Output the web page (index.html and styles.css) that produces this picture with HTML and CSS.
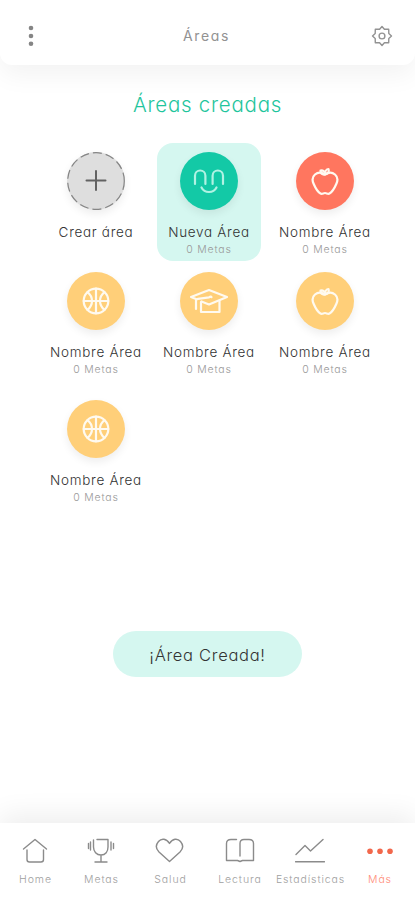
FILE: index.html
```html
<!DOCTYPE html>
<html lang="es">
<head>
  <meta charset="UTF-8">
  <meta name="viewport" content="width=device-width, initial-scale=1.0">
  <title>Áreas</title>
  <link rel="stylesheet" href="styles.css">
</head>
<body>
  <svg class="defs" width="0" height="0">
    <symbol id="apple" viewBox="0 0 30 30">
      <path d="M15 8.500C12 6.500 8 6 5 8.500C2 11 2 14 3.500 17.500C5 21 7.500 26 10.500 27.500C12 28.500 13.500 27 15 27S18 28.500 19.500 27.500C22.500 26 25 21 26.500 17.500C28 14 28 11 25 8.500C22 6 18 6.500 15 8.500Z"/>
      <path d="M15 8.500C12 9 10.500 7.500 10.500 4.500C13 4 15 5.500 15 8.500C15 5.500 16.500 3 18.500 3C19.500 6 18 8 15 8.500"/>
    </symbol>
    <symbol id="ball" viewBox="0 0 28 28">
      <circle cx="14" cy="14" r="12.300"/>
      <path d="M14 1.700V26.300M1.700 14H26.300M5.500 5.200C11.500 10 11.500 18 5.500 22.800M22.500 5.200C16.500 10 16.500 18 22.500 22.800"/>
    </symbol>
  </svg>

  <header class="topbar">
    <svg class="menu" width="6" height="22" viewBox="0 0 6 22">
      <circle cx="3" cy="3" r="2.300"/><circle cx="3" cy="11" r="2.300"/><circle cx="3" cy="18.700" r="2.300"/>
    </svg>
    <span class="topbar-title">Áreas</span>
    <svg class="gear" width="22" height="22" viewBox="0 0 22 22">
      <path d="M8.600 4.200L11 1.500L13.400 4.200L17.700 4.300L17.800 8.600L20.500 11L17.800 13.400L17.700 17.700L13.400 17.800L11 20.500L8.600 17.800L4.300 17.700L4.200 13.400L1.500 11L4.200 8.600L4.300 4.300Z"/>
      <circle cx="11" cy="11" r="2.900"/>
    </svg>
  </header>

  <main>
    <h1>Áreas creadas</h1>
    <div class="areas">
      <div class="area">
        <div class="circle add">
          <svg width="58" height="58" viewBox="0 0 58 58">
            <circle class="dash" cx="29" cy="29" r="28.300"/>
            <path class="plus" d="M29 19V38M19.500 28.500H38.500"/>
          </svg>
        </div>
        <div class="name">Crear área</div>
      </div>
      <div class="area selected">
        <div class="circle green">
          <svg width="34" height="28" viewBox="0 0 34 28">
            <path d="M3 17V8.700A5.200 5.200 0 0 1 13.400 8.700V17M20.600 17V8.700A5.200 5.200 0 0 1 31 8.700V17M9.500 20.500C12.500 26.500 21.500 26.500 24.500 20.500"/>
          </svg>
        </div>
        <div class="name">Nueva Área</div>
        <div class="goals">0 Metas</div>
      </div>
      <div class="area">
        <div class="circle red"><svg width="30" height="30"><use href="#apple"/></svg></div>
        <div class="name">Nombre Área</div>
        <div class="goals">0 Metas</div>
      </div>
      <div class="area">
        <div class="circle"><svg width="28" height="28"><use href="#ball"/></svg></div>
        <div class="name">Nombre Área</div>
        <div class="goals">0 Metas</div>
      </div>
      <div class="area">
        <div class="circle">
          <svg width="40" height="26" viewBox="0 0 40 26">
            <path d="M7 11L2 9L20 2L38 9L20 16.500L12.500 13.500"/>
            <path d="M7 21V12.500Q7 11.200 9 10.800L20 9.300Q22 8 22.500 9.200M12 14V24H30.500V12.500"/>
          </svg>
        </div>
        <div class="name">Nombre Área</div>
        <div class="goals">0 Metas</div>
      </div>
      <div class="area">
        <div class="circle"><svg width="30" height="30"><use href="#apple"/></svg></div>
        <div class="name">Nombre Área</div>
        <div class="goals">0 Metas</div>
      </div>
      <div class="area">
        <div class="circle"><svg width="28" height="28"><use href="#ball"/></svg></div>
        <div class="name">Nombre Área</div>
        <div class="goals">0 Metas</div>
      </div>
    </div>
    <div class="toast">¡Área Creada!</div>
  </main>

  <nav class="tabs">
    <div class="tab">
      <svg width="30" height="30" viewBox="0 0 30 30"><path d="M3.500 13L15 3.500L26.500 13M7 14V23.500Q7 26 9.500 26H21Q23.500 26 23.500 23.500V14"/></svg>
      <span>Home</span>
    </div>
    <div class="tab">
      <svg width="30" height="30" viewBox="0 0 30 30"><path d="M11 3.500H22V11C22 15.500 19.500 19 15 19S7.500 15.500 7.500 11V4M15 19V26M9 26H21M4.500 6V14M2.500 7.500V12.500M25 6V14M27.500 7.500V12.500"/></svg>
      <span>Metas</span>
    </div>
    <div class="tab">
      <svg width="30" height="30" viewBox="0 0 30 30"><path d="M14.500 7.500C11.500 2.500 6.500 2 3.500 5.500C.5 9 1 13 4 16L14.500 25.500L25 16C28 13 28.500 9 25.500 5.500C22.500 2 17.500 2.500 14.500 7.500Z"/></svg>
      <span>Salud</span>
    </div>
    <div class="tab">
      <svg width="30" height="30" viewBox="0 0 30 30"><path d="M11.500 3.500H6Q1.500 3.500 1.500 7.500V24.500H12.500L15 25.500L17.500 24.500H28.500V7.500Q28.500 3.500 24 3.500H19Q15 3.500 15 7.500V20"/></svg>
      <span>Lectura</span>
    </div>
    <div class="tab">
      <svg width="30" height="30" viewBox="0 0 30 30"><path d="M1 18.500L10 9.500L15.500 15L28 3.500M.5 25.800H29.500"/></svg>
      <span>Estadísticas</span>
    </div>
    <div class="tab active">
      <svg width="30" height="30" viewBox="0 0 30 30"><circle cx="5" cy="15.200" r="2.800"/><circle cx="15" cy="15.200" r="2.800"/><circle cx="25" cy="15.200" r="2.800"/></svg>
      <span>Más</span>
    </div>
  </nav>
</body>
</html>
```
FILE: styles.css
```css
* {
  box-sizing: border-box;
}
body {
  margin: 0;
  height: 900px;
  display: flex;
  flex-direction: column;
  overflow: hidden;
  background: #fff;
  color: #333;
  font-family: Inter, 'Open Sans', sans-serif;
  font-feature-settings: 'cv11';
  font-weight: 300;
}
svg {
  fill: none;
  stroke: currentColor;
  stroke-linecap: round;
  stroke-linejoin: round;
  flex-shrink: 0;
}
.defs {
  display: none;
}
.topbar {
  height: 65px;
  padding: 7px 22px 0 28px;
  display: flex;
  align-items: center;
  justify-content: space-between;
  color: #929292;
  border-radius: 0 0 12px 12px;
  box-shadow: 0 10px 26px rgba(0, 0, 0, 0.05);
}
.topbar-title {
  font-size: 14px;
  line-height: 18px;
  font-weight: 400;
  letter-spacing: 1.6px;
  margin-left: 8px;
}
.menu {
  fill: #858585;
  stroke: none;
}
.gear {
  stroke-width: 1.4;
}
main {
  flex: 1;
  display: flex;
  flex-direction: column;
  align-items: center;
}
h1 {
  margin: 26px 0 24px;
  font-size: 20.5px;
  line-height: 28px;
  font-weight: 300;
  letter-spacing: 0.75px;
  color: #1fc59d;
}
.areas {
  align-self: flex-start;
  margin-left: 39px;
  display: grid;
  grid-template-columns: 113px 113px 119px;
  grid-template-rows: 120px 128px 118px;
  justify-items: center;
}
.area {
  width: 104px;
  height: 118px;
  padding-top: 9px;
  border-radius: 16px;
  display: flex;
  flex-direction: column;
  align-items: center;
  white-space: nowrap;
}
.selected {
  background: #d5f7f0;
}
.circle {
  width: 58px;
  height: 58px;
  border-radius: 50%;
  display: flex;
  align-items: center;
  justify-content: center;
  background: #ffcf79;
  color: #fffaf0;
  stroke-width: 2.2;
  box-shadow: 0 4px 8px rgba(0, 0, 0, 0.07);
}
.add {
  background: #dedede;
}
.dash {
  stroke: #858585;
  stroke-width: 1.2;
  stroke-dasharray: 9 4;
  stroke-linecap: butt;
}
.plus {
  stroke: #626262;
  stroke-width: 2;
}
.green {
  background: #13c9a6;
  color: #b0f2e3;
}
.red {
  background: #ff765f;
}
.name {
  margin-top: 13px;
  font-size: 13.5px;
  line-height: 18px;
  letter-spacing: 0.7px;
  margin-right: -1px;
}
.goals {
  font-size: 10.5px;
  line-height: 17px;
  letter-spacing: 0.8px;
  margin-right: -1px;
  color: #999;
}
.toast {
  width: 189px;
  height: 46px;
  margin-top: 122px;
  border-radius: 23px;
  background: #d5f7f0;
  font-size: 16.5px;
  line-height: 48px;
  letter-spacing: 0.7px;
  text-align: center;
}
.tabs {
  height: 77px;
  padding: 13px 2px 0;
  display: grid;
  grid-template-columns: 66px 66px 72px 67px 74px 65px;
  background: #fff;
  box-shadow: 0 -8px 28px rgba(0, 0, 0, 0.07);
}
.tab {
  display: flex;
  flex-direction: column;
  align-items: center;
  color: #8b8b8b;
  stroke-width: 1.4;
}
.tab span {
  margin-top: 5px;
  font-size: 10.5px;
  line-height: 17px;
  letter-spacing: 0.9px;
  margin-right: -1px;
  color: #a0a0a0;
}
.active svg {
  fill: #f2684c;
  stroke: none;
}
.tab.active span {
  color: #ff8b78;
}
```
